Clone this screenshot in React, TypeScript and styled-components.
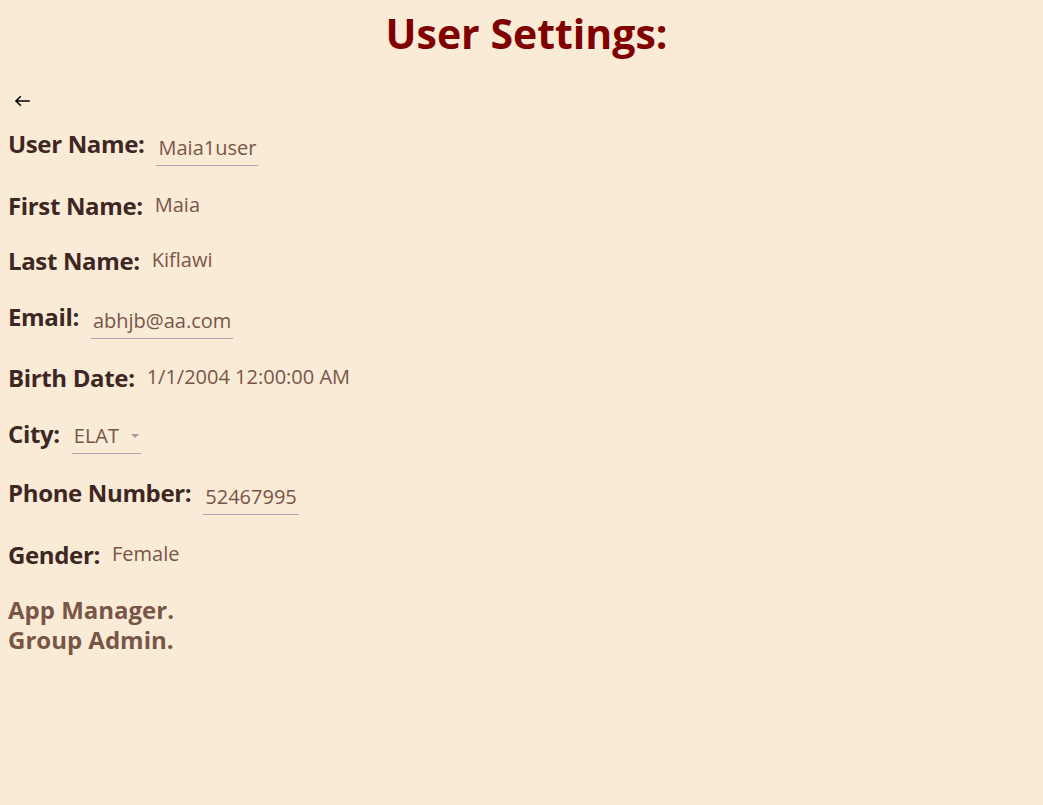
import React from "react";
import styled, { createGlobalStyle } from "styled-components";

const GlobalStyle = createGlobalStyle`
  html, body {
    margin: 0;
    padding: 0;
    background: #faebd7;
  }
  body {
    font-family: "Open Sans", "Noto Sans", sans-serif;
  }
`;

const Page = styled.div`
  min-height: 805px;
  box-sizing: border-box;
  padding: 8px;
  background: #faebd7;
  display: flex;
  flex-direction: column;
  align-items: stretch;
`;

const Title = styled.h1`
  margin: 0;
  font-size: 41px;
  line-height: 50px;
  font-weight: 700;
  color: #800000;
  text-align: center;
  padding-left: 10px;
`;

const BackButton = styled.button`
  align-self: flex-start;
  margin: 32px 0 0;
  padding: 0 0 0 6px;
  width: 30px;
  height: 20px;
  background: transparent;
  border: none;
  display: flex;
  align-items: center;
  cursor: pointer;
`;

const Fields = styled.div`
  margin-top: 18px;
  display: flex;
  flex-direction: column;
  gap: 23.5px;
`;

const Row = styled.div`
  display: flex;
  align-items: flex-start;
  gap: 12px;
`;

const Label = styled.h2`
  margin: 0;
  font-size: 24px;
  line-height: 32px;
  font-weight: 700;
  letter-spacing: -0.35px;
  color: #3e2723;
  white-space: nowrap;
`;

const Value = styled.span`
  margin-top: 1px;
  font-size: 20px;
  line-height: 28px;
  color: #795548;
  white-space: nowrap;
`;

const InputBox = styled.div<{ $top?: number }>`
  margin-top: ${(p) => p.$top ?? 3}px;
  padding: 3px 2px 3px;
  border-bottom: 1px solid #aaa8b4;
  display: flex;
  align-items: center;
  gap: 12px;
  font-size: 20px;
  line-height: 28px;
  color: #795548;
  white-space: nowrap;
`;

const Caret = styled.span`
  width: 0;
  height: 0;
  border-left: 4px solid transparent;
  border-right: 4px solid transparent;
  border-top: 4px solid #9e9e9e;
`;

const Roles = styled.div`
  margin-top: 24px;
  display: flex;
  flex-direction: column;
`;

const Role = styled.div`
  font-size: 24px;
  line-height: 30px;
  font-weight: 700;
  color: #795548;
`;

const BackArrow = () => (
  <svg width="20" height="20" viewBox="0 0 20 20" fill="none">
    <path
      d="M2 11H15M6.3 6.7L2 11L6.3 15.3"
      stroke="#000"
      strokeWidth="1.5"
      strokeLinecap="square"
    />
  </svg>
);

type Field = { label: string; value: string; kind: "text" | "input" | "select" };

const fields: Field[] = [
  { label: "User Name:", value: "Maia1user", kind: "input" },
  { label: "First Name:", value: "Maia", kind: "text" },
  { label: "Last Name:", value: "Kiflawi", kind: "text" },
  { label: "Email:", value: "abhjb@aa.com", kind: "input" },
  { label: "Birth Date:", value: "1/1/2004 12:00:00 AM", kind: "text" },
  { label: "City:", value: "ELAT", kind: "select" },
  { label: "Phone Number:", value: "52467995", kind: "input" },
  { label: "Gender:", value: "Female", kind: "text" },
];

export default function App() {
  return (
    <>
      <GlobalStyle />
      <Page>
        <Title>User Settings:</Title>
        <BackButton aria-label="back">
          <BackArrow />
        </BackButton>
        <Fields>
          {fields.map((f) => (
            <Row key={f.label}>
              <Label>{f.label}</Label>
              {f.kind === "text" && <Value>{f.value}</Value>}
              {f.kind === "input" && <InputBox>{f.value}</InputBox>}
              {f.kind === "select" && (
                <InputBox $top={1}>
                  {f.value}
                  <Caret />
                </InputBox>
              )}
            </Row>
          ))}
        </Fields>
        <Roles>
          <Role>App Manager.</Role>
          <Role>Group Admin.</Role>
        </Roles>
      </Page>
    </>
  );
}
